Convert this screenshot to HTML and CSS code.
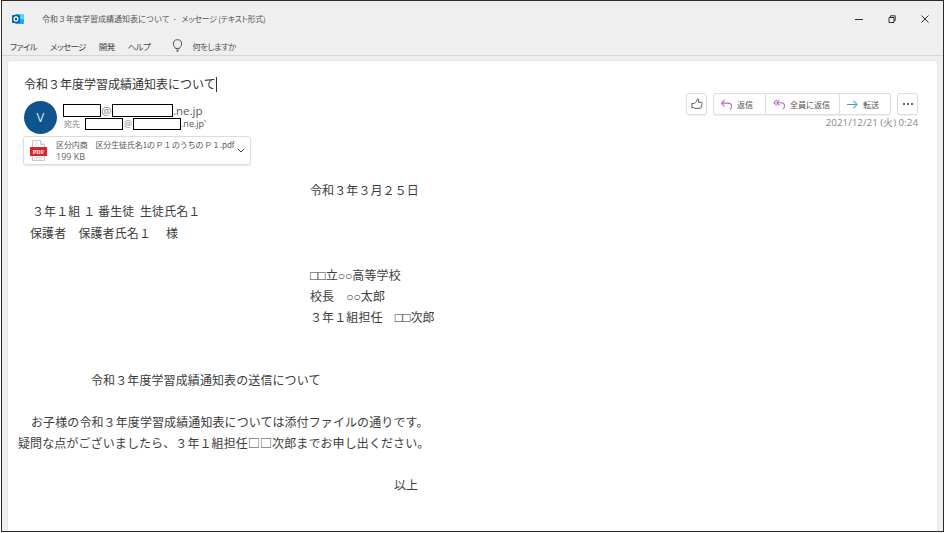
FILE: index.html
```html
<!DOCTYPE html>
<html lang="ja">
<head>
<meta charset="utf-8">
<title>令和３年度学習成績通知表について</title>
<link rel="stylesheet" href="styles.css">
</head>
<body>
<div class="window">
  <header class="titlebar">
    <svg class="app-icon" viewBox="0 0 12 12"><rect x="3" y="1" width="9" height="10" rx="1" fill="#28a8ea"/><rect x="7" y="1" width="5" height="5" fill="#50d9ff"/><rect x="0" y="2" width="8" height="8" rx="1" fill="#0f5ea8"/><ellipse cx="4" cy="6" rx="1.9" ry="2.2" fill="none" stroke="#fff" stroke-width="1.2"/></svg>
    <span class="title-text"><span class="title-main">令和３年度学習成績通知表について</span>&nbsp;&nbsp;-&nbsp;&nbsp;&nbsp;<span class="title-sub">メッセージ (テキスト形式)</span></span>
    <div class="controls">
      <svg viewBox="0 0 10 10"><path d="M1 5.5h8" stroke="#333" stroke-width="1"/></svg>
      <svg viewBox="0 0 10 10"><path d="M2 3.5h5v5H2zM3.500 3.500V1.800h4.700v4.700H7" fill="none" stroke="#333" stroke-width="1"/></svg>
      <svg viewBox="0 0 10 10"><path d="M1.500 1.500l7 7M8.500 1.500l-7 7" stroke="#333" stroke-width="1"/></svg>
    </div>
  </header>
  <nav class="menubar">
    <span>ファイル</span><span>メッセージ</span><span>開発</span><span>ヘルプ</span>
    <span class="tell">
      <svg viewBox="0 0 12 14"><path d="M3.800 10.200C3.500 8.500 1.500 7.800 1.500 5.200a4.500 4.500 0 0 1 9 0c0 2.600-2 3.300-2.300 5zM4.500 12h3M5.200 13.500h1.600" fill="none" stroke="#444" stroke-width="1"/></svg>
      何をしますか
    </span>
  </nav>
  <main class="card">
    <h1 class="subject">令和３年度学習成績通知表について<i class="caret"></i></h1>
    <section class="meta">
      <div class="meta-left">
        <div class="sender">
          <div class="avatar">V</div>
          <div class="addresses">
            <div class="from"><b class="redact r-a"></b><span class="at">@</span><b class="redact r-b"></b><span>.ne.jp</span></div>
            <div class="to"><span class="to-label">宛先</span><b class="redact r-c"></b><span class="at">@</span><b class="redact r-d"></b><span>.ne.jp'</span></div>
          </div>
        </div>
        <div class="attachment">
          <svg class="pdf" viewBox="0 0 17 21"><path d="M2.500.5h8l4 4v16h-12z" fill="#fff" stroke="#c8c8c8"/><path d="M10.500.5v4h4" fill="#eee" stroke="#c8c8c8"/><path d="M4.500 3h4M4.500 5h4M4.500 17.500h8M4.500 19h8" stroke="#ddd"/><rect x="0" y="7" width="17" height="9" fill="#d9232e"/><text x="8.500" y="14" class="pdf-label">PDF</text></svg>
          <div class="att-text">
            <div class="att-name">区分内商　区分生徒氏名1の Ｐ１ のうちの Ｐ１.pdf</div>
            <div class="att-size">199 KB</div>
          </div>
          <svg class="chev" viewBox="0 0 8 5"><path d="M.8.8L4 4l3.200-3.200" fill="none" stroke="#444" stroke-width="1"/></svg>
        </div>
      </div>
      <div class="meta-right">
        <div class="actions">
          <button class="btn like"><svg viewBox="0 0 14 14"><path d="M1 6.500h2.800L6.500 4 7.500 1c1.500 0 1.800 1.500 1.200 4h3.300c1 0 1.200.8.900 1.600l-1.200 4.600c-.2.600-.6.800-1.200.8H3.800l-.9-.8H1z" fill="none" stroke="#444" stroke-width="1"/></svg></button>
          <div class="group">
            <button class="btn seg s1"><svg viewBox="0 0 14 12"><path d="M5 1L1.500 4.500 5 8M1.500 4.500h7c3 0 4 2 4 3.500s-.8 3-2 3.500" fill="none" stroke="#b664c8" stroke-width="1.100"/></svg>返信</button>
            <button class="btn seg s2"><svg viewBox="0 0 14 12"><path d="M4 1L1 4l3 3M7 1L4 4l3 3M4 4h4.500c2.500 0 4 1.700 4 3.500 0 1.500-.8 3-2 3.500" fill="none" stroke="#b664c8" stroke-width="1.100"/></svg>全員に返信</button>
            <button class="btn seg s3"><svg viewBox="0 0 14 12"><path d="M1 6h11M8 2l4 4-4 4" fill="none" stroke="#3f9fd8" stroke-width="1.100"/></svg>転送</button>
          </div>
          <button class="btn more"><i></i><i></i><i></i></button>
        </div>
        <time class="date">2021/12/21 (火) 0:24</time>
      </div>
    </section>
    <article class="letter">
      <p class="in-date">令和３年３月２５日</p>
      <p class="in-a">３年１組 １ 番生徒&nbsp;&nbsp;生徒氏名１</p>
      <p class="in-b">保護者　保護者氏名１　 様</p>
      <p class="blank"></p>
      <p class="in-date"><span class="nb">□□</span>立<span class="no">○○</span>高等学校</p>
      <p class="in-date">校長　<span class="no">○○</span>太郎</p>
      <p class="in-sig">３年１組担任　<span class="nb">□□</span>次郎</p>
      <p class="blank"></p>
      <p class="blank"></p>
      <p class="in-title">令和３年度学習成績通知表の送信について</p>
      <p class="blank"></p>
      <p class="in-c">お子様の令和３年度学習成績通知表については添付ファイルの通りです。</p>
      <p>疑問な点がございましたら、３年１組担任□□次郎までお申し出ください。</p>
      <p class="blank"></p>
      <p class="in-end">以上</p>
    </article>
  </main>
</div>
</body>
</html>
```

FILE: styles.css
```css
* { box-sizing: border-box; }
html, body { margin: 0; height: 100%; background: #fff; }
body {
  padding: 0 1px 1px 1px;
  font-family: "Noto Sans CJK JP", sans-serif;
  color: #3c3c3c;
  overflow: hidden;
}
.window {
  height: 532px;
  border: 1px solid #2a2a2a;
  background: #efefef;
  display: flex;
  flex-direction: column;
  overflow: hidden;
}
.titlebar {
  height: 35px;
  flex: none;
  display: flex;
  align-items: center;
  padding: 0 13px 0 10px;
}
.app-icon { width: 12px; height: 12px; flex: none; margin-right: 18px; }
.title-text { font-size: 8px; color: #555; flex: 1; white-space: pre; }
.title-sub { font-feature-settings: "palt"; letter-spacing: -.25px; }
.controls { display: flex; gap: 23px; }
.controls svg { width: 10px; height: 10px; display: block; }
.menubar {
  height: 20px;
  flex: none;
  display: flex;
  align-items: center;
  gap: 13px;
  padding-left: 8px;
  font-size: 8.500px;
  letter-spacing: -.6px;
  font-feature-settings: "palt";
  color: #444;
  border-bottom: 1px solid #d6d6d6;
}
.tell { display: flex; align-items: center; gap: 9px; margin-left: 9px; color: #555; }
.tell svg { width: 11px; height: 13px; }
.card {
  flex: 1;
  margin: 5px 6px 0 6px;
  background: #fff;
  border-radius: 3px 3px 0 0;
  padding: 13px 19px 0 16px;
  min-height: 0;
  box-shadow: 0 0 2px rgba(0,0,0,.12);
}
.subject {
  margin: 0;
  font-size: 12px;
  font-weight: 400;
  line-height: 20px;
  color: #333;
  display: flex;
  align-items: center;
}
.caret { width: 1px; height: 15px; background: #333; display: block; }
.meta { display: flex; justify-content: space-between; margin-top: 7px; }
.sender { display: flex; gap: 6px; align-items: flex-start; }
.avatar {
  width: 33px;
  height: 33px;
  border-radius: 50%;
  background: #0f548c;
  color: #dce8f2;
  font: 13px/33px "Open Sans", sans-serif;
  text-align: center;
}
.addresses { padding-top: 3px; }
.from, .to { display: flex; align-items: center; font-family: "Open Sans", sans-serif; color: #555; }
.from { font-size: 11.500px; height: 13px; }
.to { font-size: 9px; height: 12px; margin-top: 1px; }
.to span { margin-top: -2px; }
.to-label { font-family: "Noto Sans CJK JP", sans-serif; font-size: 8px; width: 22px; padding-left: 1px; color: #888; }
.at { color: #888; width: 11px; text-align: center; }
.redact { display: block; border: 1px solid #000; background: #fff; height: 13px; }
.r-a { width: 38px; }
.r-b { width: 61px; }
.r-c { width: 38px; height: 12px; }
.r-d { width: 48px; height: 12px; }
.to .at { width: 10px; }
.attachment {
  width: 228px;
  height: 29px;
  margin: 2px 0 0 -1px;
  border: 1px solid #dcdcdc;
  border-radius: 3px;
  box-shadow: 0 1px 2px rgba(0,0,0,.1);
  display: flex;
  align-items: center;
  padding: 0 5px 0 6px;
}
.pdf { width: 17px; height: 21px; flex: none; margin-right: 9px; }
.pdf-label { font: 700 6px "Liberation Serif", serif; fill: #fff; text-anchor: middle; }
.att-text { flex: 1; font-size: 8px; line-height: 11px; color: #555; white-space: nowrap; min-width: 0; }
.att-name { letter-spacing: -.12px; word-spacing: -1px; }
.att-size { font-family: "Open Sans", sans-serif; font-size: 9px; color: #666; margin-top: 1px; }
.chev { width: 8px; height: 5px; flex: none; }
.meta-right { display: flex; flex-direction: column; align-items: flex-end; margin-top: -8px; }
.actions { display: flex; gap: 6px; }
.btn {
  height: 22px;
  margin: 0;
  padding: 0;
  border: 1px solid #dedede;
  border-radius: 3px;
  background: #fff;
  font: 8px "Noto Sans CJK JP", sans-serif;
  color: #555;
  display: flex;
  align-items: center;
  justify-content: center;
  box-shadow: 0 1px 1px rgba(0,0,0,.06);
}
.like { width: 21px; }
.like svg { width: 12px; height: 12px; }
.group { display: flex; }
.seg { gap: 4px; border-radius: 0; border-left-width: 0; justify-content: flex-start; }
.seg svg { width: 13px; height: 11px; }
.s1 { width: 53px; padding-left: 6px; border-left-width: 1px; border-radius: 3px 0 0 3px; }
.s2 { width: 74px; padding-left: 7px; }
.s3 { width: 51px; padding-left: 6px; border-radius: 0 3px 3px 0; }
.more { width: 21px; gap: 2px; }
.more i { width: 2px; height: 2px; border-radius: 50%; background: #333; display: block; }
.date { font: 9.800px/12px "Open Sans", sans-serif; color: #888; margin-top: 2px; }
.letter { margin: 14.400px 0 0 -6px; font-size: 12px; letter-spacing: .1px; line-height: 21.080px; color: #3c3c3c; white-space: nowrap; }
.letter p { margin: 0; height: 21.080px; }
.in-date { padding-left: 292px; }
.in-sig { padding-left: 292px; }
.in-a { padding-left: 14px; }
.in-b { padding-left: 12px; }
.in-c { padding-left: 13px; }
.in-title { padding-left: 73px; }
.in-end { padding-left: 376px; }
.nb { font: 13px "Liberation Sans", sans-serif; color: #333; letter-spacing: 0; }
.no { font: 12px "Liberation Sans", sans-serif; color: #333; letter-spacing: 0; }
```
